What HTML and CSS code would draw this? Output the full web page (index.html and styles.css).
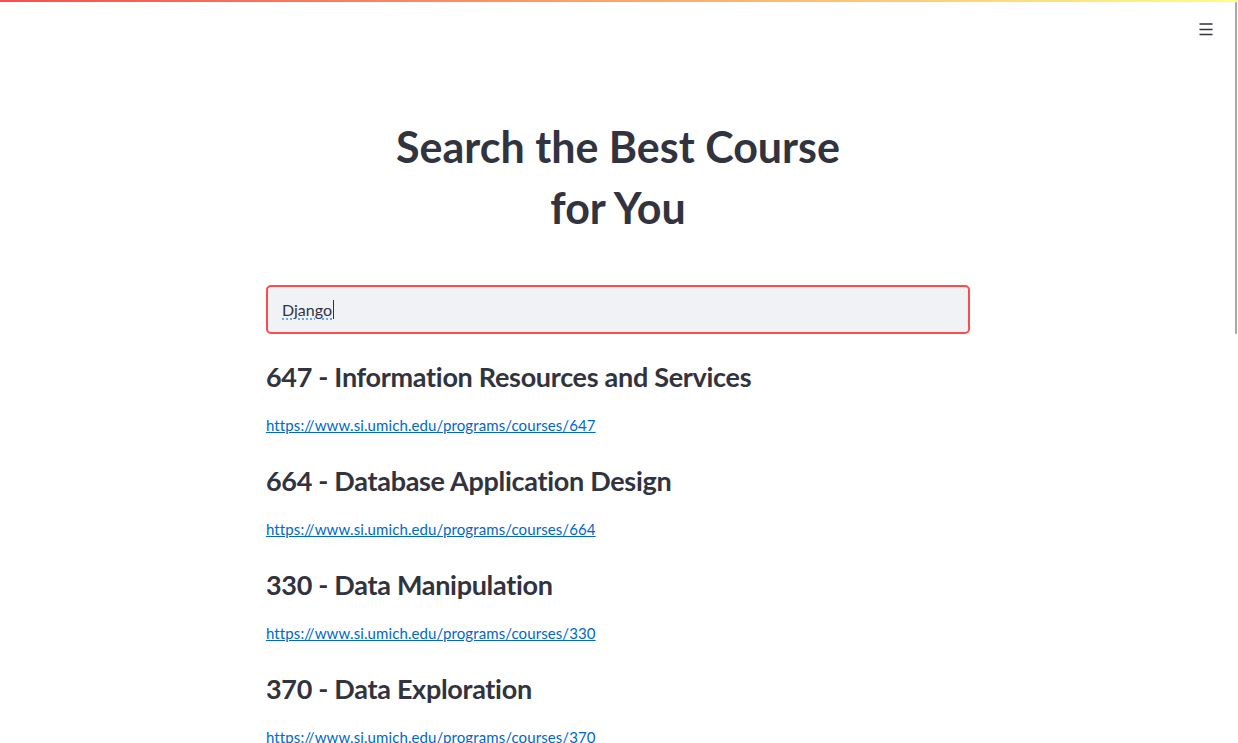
FILE: index.html
```html
<!DOCTYPE html>
<html lang="en">
<head>
<meta charset="utf-8">
<title>Search the Best Course for You</title>
<link rel="stylesheet" href="styles.css">
</head>
<body>
<div class="decoration"></div>
<header class="toolbar">
  <button class="menu" aria-label="Main menu">
    <svg width="16" height="16" viewBox="0 0 16 16"><path d="M1.5 3h13M1.5 8.5h13M1.5 13.5h13" stroke="#31333f" stroke-width="1.5" fill="none"/></svg>
  </button>
</header>
<main class="main">
  <div class="block">
    <h1 class="title">Search the Best Course<br>for You</h1>
    <div class="input-box"><span class="typed">Django</span><span class="caret"></span></div>
    <div class="results">
      <div class="result">
        <h3>647 - Information Resources and Services</h3>
        <a href="#">https://www.si.umich.edu/programs/courses/647</a>
      </div>
      <div class="result">
        <h3>664 - Database Application Design</h3>
        <a href="#">https://www.si.umich.edu/programs/courses/664</a>
      </div>
      <div class="result">
        <h3>330 - Data Manipulation</h3>
        <a href="#">https://www.si.umich.edu/programs/courses/330</a>
      </div>
      <div class="result">
        <h3>370 - Data Exploration</h3>
        <a href="#">https://www.si.umich.edu/programs/courses/370</a>
      </div>
    </div>
  </div>
</main>
<div class="scrollbar"></div>
</body>
</html>
```
FILE: styles.css
```css
html, body {
  margin: 0;
  padding: 0;
  height: 100%;
  overflow: hidden;
  background: #ffffff;
}
body {
  font-family: "Lato", "Noto Sans", sans-serif;
  color: #31333f;
  position: relative;
}
.decoration {
  height: 2px;
  background: linear-gradient(90deg, #ff4b4b, #fffd80);
}
.toolbar {
  display: flex;
  justify-content: flex-end;
  padding: 19px 24px 0 0;
}
.menu {
  border: 0;
  background: none;
  padding: 0;
  width: 16px;
  height: 16px;
  display: flex;
}
.main {
  display: flex;
  justify-content: center;
  padding-right: 2px;
}
.block {
  width: 704px;
  padding-top: 79px;
}
.title {
  margin: 0;
  text-align: center;
  font-size: 43px;
  line-height: 61px;
  font-weight: 700;
}
.input-box {
  margin-top: 47px;
  height: 45px;
  border: 2px solid #ff4b4b;
  border-radius: 5px;
  background: #f0f2f6;
  display: flex;
  align-items: center;
  padding-left: 14px;
  font-size: 16px;
}
.typed {
  text-decoration: underline dotted #4a90e2;
  text-underline-offset: 3px;
}
.caret {
  width: 1px;
  height: 19px;
  background: #31333f;
  margin-left: 1px;
}
.results {
  display: flex;
  flex-direction: column;
  padding-top: 25px;
}
.result {
  display: flex;
  flex-direction: column;
  align-items: flex-start;
  height: 104px;
}
.result h3 {
  margin: 0;
  font-size: 27px;
  line-height: 36px;
  font-weight: 700;
  letter-spacing: -0.3px;
}
.result a {
  margin-top: 21px;
  font-size: 15px;
  letter-spacing: 0.1px;
  color: #0068c9;
  text-decoration: underline;
}
.scrollbar {
  position: absolute;
  top: 2px;
  right: 1px;
  width: 2px;
  height: 332px;
  background: #a8a8a8;
  border-radius: 1px;
}
```
